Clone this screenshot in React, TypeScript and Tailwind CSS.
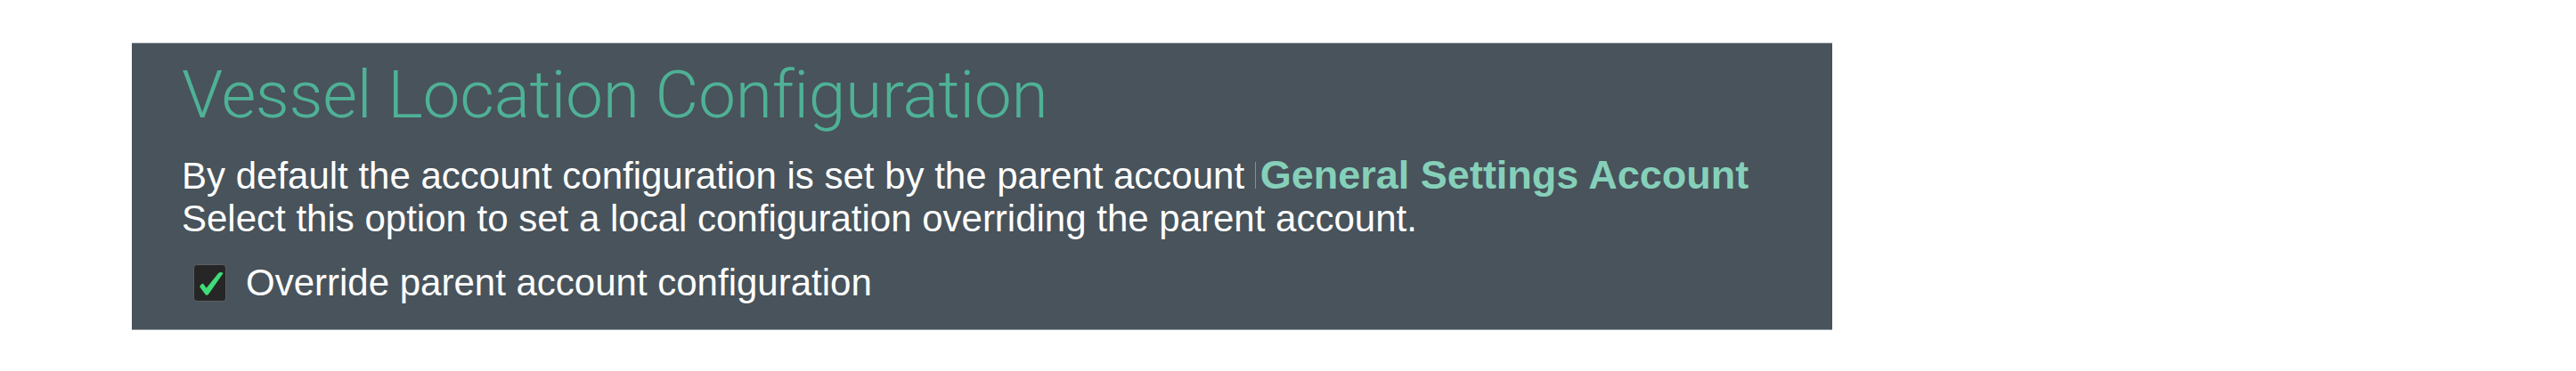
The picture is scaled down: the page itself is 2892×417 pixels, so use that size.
import React from "react";

export default function App() {
  return (
    <div className="w-[2892px] h-[417px] bg-white pl-[148px] pt-[48px]">
      <div className="w-[1909px] h-[323px] bg-[#48535b] border-t border-b border-[#8a949a] pl-[56px] pt-[18px]">
        <h1
          className="text-[75px] leading-[78px] font-light text-[#4fb196] tracking-[-0.3px]"
          style={{ fontFamily: "Roboto, 'Liberation Sans', sans-serif" }}
        >
          Vessel Location Configuration
        </h1>
        <div
          className="mt-[28px] text-[42px] leading-[48px] text-white"
          style={{ fontFamily: "'Liberation Sans', Arial, sans-serif" }}
        >
          <p>
            By default the account configuration is set by the parent account{" "}
            <span className="inline-block border-l border-[#6f9c8e] pl-[6px] h-[30px] leading-[30px] align-baseline" />
            <span className="font-bold text-[45px] text-[#86d0ba] -ml-[1px]">General Settings Account</span>
          </p>
          <p>Select this option to set a local configuration overriding the parent account.</p>
        </div>
        <label
          className="mt-[24px] ml-[13px] flex items-center gap-[22px] h-[48px] text-[42px] leading-[48px] text-white"
          style={{ fontFamily: "'Liberation Sans', Arial, sans-serif" }}
        >
          <span className="w-[37px] h-[42px] rounded-[4px] bg-[#262626] border border-[#5a5f63] flex items-center justify-center">
            <svg width="37" height="42" viewBox="0 0 37 42">
              <path
                d="M6.5 25.5 Q7.5 22.5 10.5 21.5 L14.5 27 L29 9 Q32 7.5 34.5 9.5 L17 34.5 Q15.5 36.5 13.5 35 Z"
                fill="#3fdc78"
              />
            </svg>
          </span>
          <span>Override parent account configuration</span>
        </label>
      </div>
    </div>
  );
}
